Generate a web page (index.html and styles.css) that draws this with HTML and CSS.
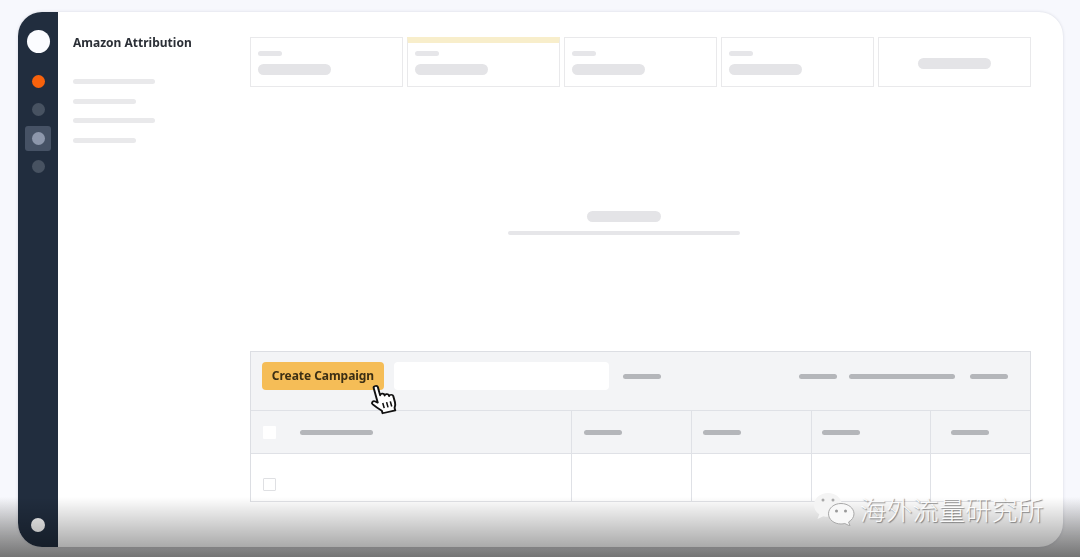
FILE: index.html
```html
<!DOCTYPE html>
<html lang="zh">
<head>
<meta charset="utf-8">
<title>Amazon Attribution</title>
<link rel="stylesheet" href="styles.css">
</head>
<body>
<div class="window">
  <nav class="rail">
    <span class="logo"></span>
    <span class="dot dot-orange"></span>
    <span class="dot dot-dim"></span>
    <span class="rail-active"><span class="dot dot-light"></span></span>
    <span class="dot dot-dim"></span>
    <span class="dot dot-foot"></span>
  </nav>
  <aside class="side">
    <div class="brand">Amazon Attribution</div>
    <div class="side-list">
      <span class="side-bar side-long"></span>
      <span class="side-bar side-short"></span>
      <span class="side-bar side-long"></span>
      <span class="side-bar side-short"></span>
    </div>
  </aside>
  <main class="main">
    <section class="cards">
      <div class="card"><span class="sk-small"></span><span class="sk-big"></span></div>
      <div class="card card-accent"><span class="sk-small"></span><span class="sk-big"></span></div>
      <div class="card"><span class="sk-small"></span><span class="sk-big"></span></div>
      <div class="card"><span class="sk-small"></span><span class="sk-big"></span></div>
      <div class="card card-center"><span class="sk-big"></span></div>
    </section>
    <section class="empty">
      <span class="empty-title"></span>
      <span class="empty-line"></span>
    </section>
    <section class="table">
      <div class="toolbar">
        <button class="create">Create Campaign</button>
        <span class="search"></span>
        <span class="tb-bar tb-38"></span>
        <span class="tb-spacer"></span>
        <span class="tb-bar tb-38"></span>
        <span class="tb-bar tb-106"></span>
        <span class="tb-bar tb-38"></span>
      </div>
      <div class="thead">
        <div class="cell cell-first"><span class="check check-head"></span><span class="th-bar th-wide"></span></div>
        <div class="cell"><span class="th-bar"></span></div>
        <div class="cell cell-third"><span class="th-bar"></span></div>
        <div class="cell cell-fourth"><span class="th-bar"></span></div>
        <div class="cell cell-last"><span class="th-bar"></span></div>
      </div>
      <div class="tbody">
        <div class="cell cell-first"><span class="check check-row"></span></div>
        <div class="cell"></div>
        <div class="cell"></div>
        <div class="cell"></div>
        <div class="cell cell-last"></div>
      </div>
    </section>
  </main>
</div>

<svg class="pointer" viewBox="0 0 26 30" width="31" height="32" preserveAspectRatio="none" aria-hidden="true">
  <g transform="rotate(-14 13 15)">
    <path d="M7.500 3c0-2 3.600-2 3.600 0v8c.3-1.600 3.400-1.600 3.600.2v1c.3-1.500 3.300-1.400 3.500.3v1c.4-1.400 3.400-1.100 3.400.8v6c0 2.200-.7 3.600-1.600 5v2.500h-11v-2.500c-1.800-1.800-4-4.400-6-7.500-1.200-2 1-3.600 2.800-2.200l1.700 1.600z" fill="#fff" stroke="#111" stroke-width="1.600" stroke-linejoin="round"/>
    <path d="M11.500 18.500v5M14.800 18.500v5M18 18.500v5" stroke="#111" stroke-width="1.300" fill="none"/>
  </g>
</svg>

<div class="shade"></div>

<div class="mark">
  <svg class="mark-icon" viewBox="0 0 42 34" width="42" height="34" aria-hidden="true">
    <path d="M15 1C7.200 1 1 6.300 1 13c0 3.800 2 7.100 5.300 9.300L4.500 27l5.800-2.800c1.500.400 3 .600 4.700.600 7.800 0 14-5.300 14-11.800S22.800 1 15 1z" fill="#f4f4f4"/>
    <circle cx="10" cy="8" r="1.500" fill="#a8a8a8"/>
    <circle cx="20" cy="8" r="1.500" fill="#a8a8a8"/>
    <path d="M28 11.500c-7 0-12.500 4.600-12.500 10.300S21 32 28 32c1.300 0 2.600-.2 3.800-.5l5.200 2.500-1.400-4c3.300-1.900 5.400-4.900 5.400-8.200 0-5.700-5.900-10.300-13-10.300z" fill="#f8f8f8" stroke="#a8a8a8" stroke-width="1"/>
    <circle cx="23.500" cy="19" r="1.500" fill="#999"/>
    <circle cx="32.500" cy="19" r="1.500" fill="#999"/>
  </svg>
  <span class="mark-text">海外流量研究所</span>
</div>
</body>
</html>
```
FILE: styles.css
```css
* { box-sizing: border-box; }
html, body { margin: 0; height: 100%; }
body {
  position: relative;
  width: 1080px;
  height: 557px;
  overflow: hidden;
  padding: 12px 17px 10px 18px;
  background: linear-gradient(to bottom, #f7f8fd 0, #f7f8fd 497px, #c2c2c2 557px);
  font-family: "Noto Sans", "Open Sans", sans-serif;
}
.window {
  display: flex;
  height: 535px;
  border-radius: 24px;
  overflow: hidden;
  background: #fff;
  box-shadow: 0 0 3px rgba(90, 95, 120, .22);
  filter: blur(.3px);
}
.rail {
  flex: none;
  width: 40px;
  display: flex;
  flex-direction: column;
  align-items: center;
  padding: 18px 0 15px;
  background: #212d3e;
}
.logo { width: 23px; height: 23px; border-radius: 50%; background: #fbfcff; }
.dot { display: block; width: 13px; height: 13px; border-radius: 50%; }
.dot-orange { margin-top: 22px; background: #f8620c; }
.dot-dim { margin-top: 15px; background: #475261; }
.rail-active {
  display: flex;
  align-items: center;
  justify-content: center;
  width: 26px;
  height: 25px;
  margin-top: 10px;
  border-radius: 3px;
  background: #465265;
}
.rail-active + .dot-dim { margin-top: 9px; }
.dot-light { background: #8d97ab; }
.dot-foot { margin-top: auto; width: 14px; height: 14px; background: #fafafa; }
.side { flex: none; width: 192px; padding: 22px 15px 0; }
.brand { font-size: 12px; line-height: 18px; font-weight: 700; color: #2b2f36; white-space: nowrap; }
.side-list { display: flex; flex-direction: column; align-items: flex-start; gap: 14.500px; margin-top: 27px; }
.side-bar { height: 5px; border-radius: 3px; background: #e9e9eb; }
.side-long { width: 82px; }
.side-short { width: 63px; }
.main { flex: none; width: 781px; padding-top: 25px; }
.cards { display: grid; grid-template-columns: repeat(5, 153px); gap: 4px; }
.card {
  display: flex;
  flex-direction: column;
  align-items: flex-start;
  height: 50px;
  padding: 13px 7px 0;
  border: 1px solid #e9e9eb;
  background: #fff;
}
.card-accent { padding-top: 8px; border-top: 6px solid #f8eecb; }
.card-center { align-items: center; justify-content: center; padding: 0; }
.sk-small { width: 24px; height: 5px; border-radius: 3px; background: #e6e6e9; }
.sk-big { width: 73px; height: 11px; margin-top: 8px; border-radius: 6px; background: #e4e4e7; }
.card-center .sk-big { margin-top: 3px; }
.empty { display: flex; flex-direction: column; align-items: center; height: 264px; padding: 124px 34px 0 0; }
.empty-title { width: 74px; height: 11px; border-radius: 6px; background: #e4e4e7; }
.empty-line { width: 232px; height: 4px; margin-top: 9px; border-radius: 2px; background: #e6e6e9; }
.table { border: 1px solid #dcdee3; border-bottom-color: #e2e3e7; height: 151px; background: #fff; }
.toolbar {
  display: flex;
  align-items: center;
  height: 59px;
  padding: 0 22px 10px 11px;
  background: #f3f4f6;
  border-bottom: 1px solid #dfe1e6;
}
.create {
  flex: none;
  width: 122px;
  height: 28px;
  padding: 0;
  border: 0;
  border-radius: 4px;
  background: #f5bd57;
  color: #3c2f14;
  font: 700 12px/28px "Noto Sans", sans-serif;
  letter-spacing: -.05px;
}
.search { flex: none; width: 215px; height: 28px; margin-left: 10px; border-radius: 4px; background: #fff; }
.tb-bar { flex: none; height: 5px; border-radius: 3px; background: #b4b6ba; }
.search + .tb-bar { margin-left: 14px; }
.tb-38 { width: 38px; }
.tb-106 { width: 106px; margin: 0 15px 0 12px; }
.tb-spacer { flex: 1; }
.thead, .tbody { display: grid; grid-template-columns: 321px 120px 120px 119px 99px; }
.thead { height: 43px; background: #f3f4f6; border-bottom: 1px solid #dfe1e6; }
.tbody { height: 47px; }
.cell { display: flex; align-items: center; padding-left: 12px; border-right: 1px solid #dfe1e6; }
.cell-third { padding-left: 11px; }
.cell-fourth { padding-left: 10px; }
.cell-last { padding-left: 20px; border-right: 0; }
.tbody .cell-first { padding-top: 11px; }
.th-bar { width: 38px; height: 5px; border-radius: 3px; background: #b4b6ba; }
.th-wide { width: 73px; margin-left: 24px; }
.check { flex: none; width: 13px; height: 13px; border-radius: 1px; }
.check-head { background: #fff; }
.check-row { border: 1px solid #dfe0e3; background: #fff; margin-top: 2px; }
.pointer { position: absolute; left: 368px; top: 383px; }
.shade {
  position: absolute;
  left: 0;
  right: 0;
  top: 497px;
  bottom: 0;
  background: linear-gradient(to bottom, rgba(0, 0, 0, 0), rgba(0, 0, 0, .4));
}
.mark { position: absolute; left: 813px; top: 491px; display: flex; align-items: center; gap: 5px; }
.mark-text {
  font: 300 26px/36px "Noto Sans CJK SC", sans-serif;
  letter-spacing: .3px;
  color: rgba(255, 255, 255, .92);
  text-shadow: 1px 1px 1px rgba(60, 60, 60, .55);
  white-space: nowrap;
}
```
